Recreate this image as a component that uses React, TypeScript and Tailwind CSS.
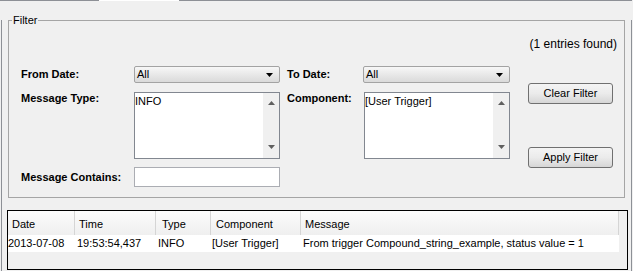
import React from 'react';

const DownArrow = ({ color = '#000' }: { color?: string }) => (
  <svg width="7" height="4" viewBox="0 0 7 4">
    <polygon points="0,0 7,0 3.5,4" fill={color} />
  </svg>
);

const UpArrow = ({ color = '#606060' }: { color?: string }) => (
  <svg width="7" height="4" viewBox="0 0 7 4">
    <polygon points="0,4 7,4 3.5,0" fill={color} />
  </svg>
);

const Combo = ({ value, width }: { value: string; width: string }) => (
  <div className={`flex h-[17px] items-center justify-between rounded-[2px] border border-[#a3a3a3] bg-linear-to-b from-[#f7f7f7] to-[#dadada] pl-[2px] pr-[6px] ${width}`}>
    <span>{value}</span>
    <DownArrow />
  </div>
);

const ListBox = ({ item, width }: { item: string; width: string }) => (
  <div className={`flex h-[67px] border border-[#828790] bg-white ${width}`}>
    <div className="flex-1 pt-[2px]">{item}</div>
    <div className="flex w-[16px] flex-col items-center justify-between bg-[#f0f0f0] pt-[8px] pb-[9px]">
      <UpArrow />
      <DownArrow color="#606060" />
    </div>
  </div>
);

const WinButton = ({ label }: { label: string }) => (
  <button className="flex h-[21px] w-[85px] items-center justify-center rounded-[3px] border border-[#707070] bg-linear-to-b from-[#f4f4f4] via-[#ebebeb] to-[#d6d6d6] text-black">
    {label}
  </button>
);

const columns = [
  { name: 'Date', value: '2013-07-08', w: 'w-[67px]', hp: 'pl-[4px]', dp: 'pl-0' },
  { name: 'Time', value: '19:53:54,437', w: 'w-[81px]', hp: 'pl-[4px]', dp: 'pl-[2px]' },
  { name: 'Type', value: 'INFO', w: 'w-[55px]', hp: 'pl-[6px]', dp: 'pl-[2px]' },
  { name: 'Component', value: '[User Trigger]', w: 'w-[90px]', hp: 'pl-[5px]', dp: 'pl-[1px]' },
  { name: 'Message', value: 'From trigger Compound_string_example, status value = 1', w: 'w-[318px]', hp: 'pl-[4px]', dp: 'pl-[2px]' },
];

export default function App() {
  return (
    <div className="h-[271px] w-[633px] overflow-hidden bg-[#f0f0f0] font-['Liberation_Sans',Arial,sans-serif] text-[11px] leading-[13px] text-black">
      {/* tab pane top edge with the selected tab gap */}
      <div className="flex h-[1px]">
        <div className="w-[99px] bg-[#8d9096]" />
        <div className="w-[80px] bg-white" />
        <div className="w-[453px] bg-[#8d9096]" />
      </div>
      <div className="ml-[1px] h-[270px] w-[631px] border-x border-[#8d9096]">
        <div className="relative mx-[6px] mt-[19px] h-[178px] border border-[#a5a5a5] pl-[12px] pr-[7px] pt-[17px]">
          <span className="absolute left-[3px] top-[-7px] bg-[#f0f0f0] px-[1px]">Filter</span>
          <div className="text-right text-[12px]">(1 entries found)</div>
          <div className="mt-[15px] flex">
            <div className="flex flex-col gap-[8px]">
              <div className="flex h-[17px] items-center">
                <div className="w-[113px] font-bold">From Date:</div>
                <Combo value="All" width="w-[146px]" />
                <div className="ml-[7px] w-[76px] font-bold">To Date:</div>
                <Combo value="All" width="w-[147px]" />
              </div>
              <div className="mt-[1px] flex h-[67px] items-start">
                <div className="w-[113px] font-bold">Message Type:</div>
                <ListBox item="INFO" width="w-[146px]" />
                <div className="ml-[7px] w-[77px] font-bold">Component:</div>
                <ListBox item="[User Trigger]" width="w-[146px]" />
              </div>
              <div className="flex h-[20px] items-center">
                <div className="w-[113px] font-bold">Message Contains:</div>
                <div className="h-[20px] w-[146px] border border-[#abadb3] bg-white" />
              </div>
            </div>
            <div className="ml-[18px] flex flex-col pt-[17px]">
              <WinButton label="Clear Filter" />
              <div className="mt-[43px]">
                <WinButton label="Apply Filter" />
              </div>
            </div>
          </div>
        </div>
        <div className="ml-[5px] mt-[12px] h-[60px] w-[621px] border border-black bg-[#f0f0f0]">
          <div className="flex h-[24px] w-[611px] bg-linear-to-b from-[#fcfcfc] to-[#efefef]">
            {columns.map(c => (
              <div key={c.name} className={`flex items-center border-r border-[#d5d5d5] pt-[2px] ${c.w} ${c.hp}`}>
                {c.name}
              </div>
            ))}
          </div>
          <div className="flex h-[17px] w-[611px] bg-white">
            {columns.map(c => (
              <div key={c.name} className={`flex items-center whitespace-nowrap ${c.w} ${c.dp}`}>
                {c.value}
              </div>
            ))}
          </div>
        </div>
      </div>
    </div>
  );
}
